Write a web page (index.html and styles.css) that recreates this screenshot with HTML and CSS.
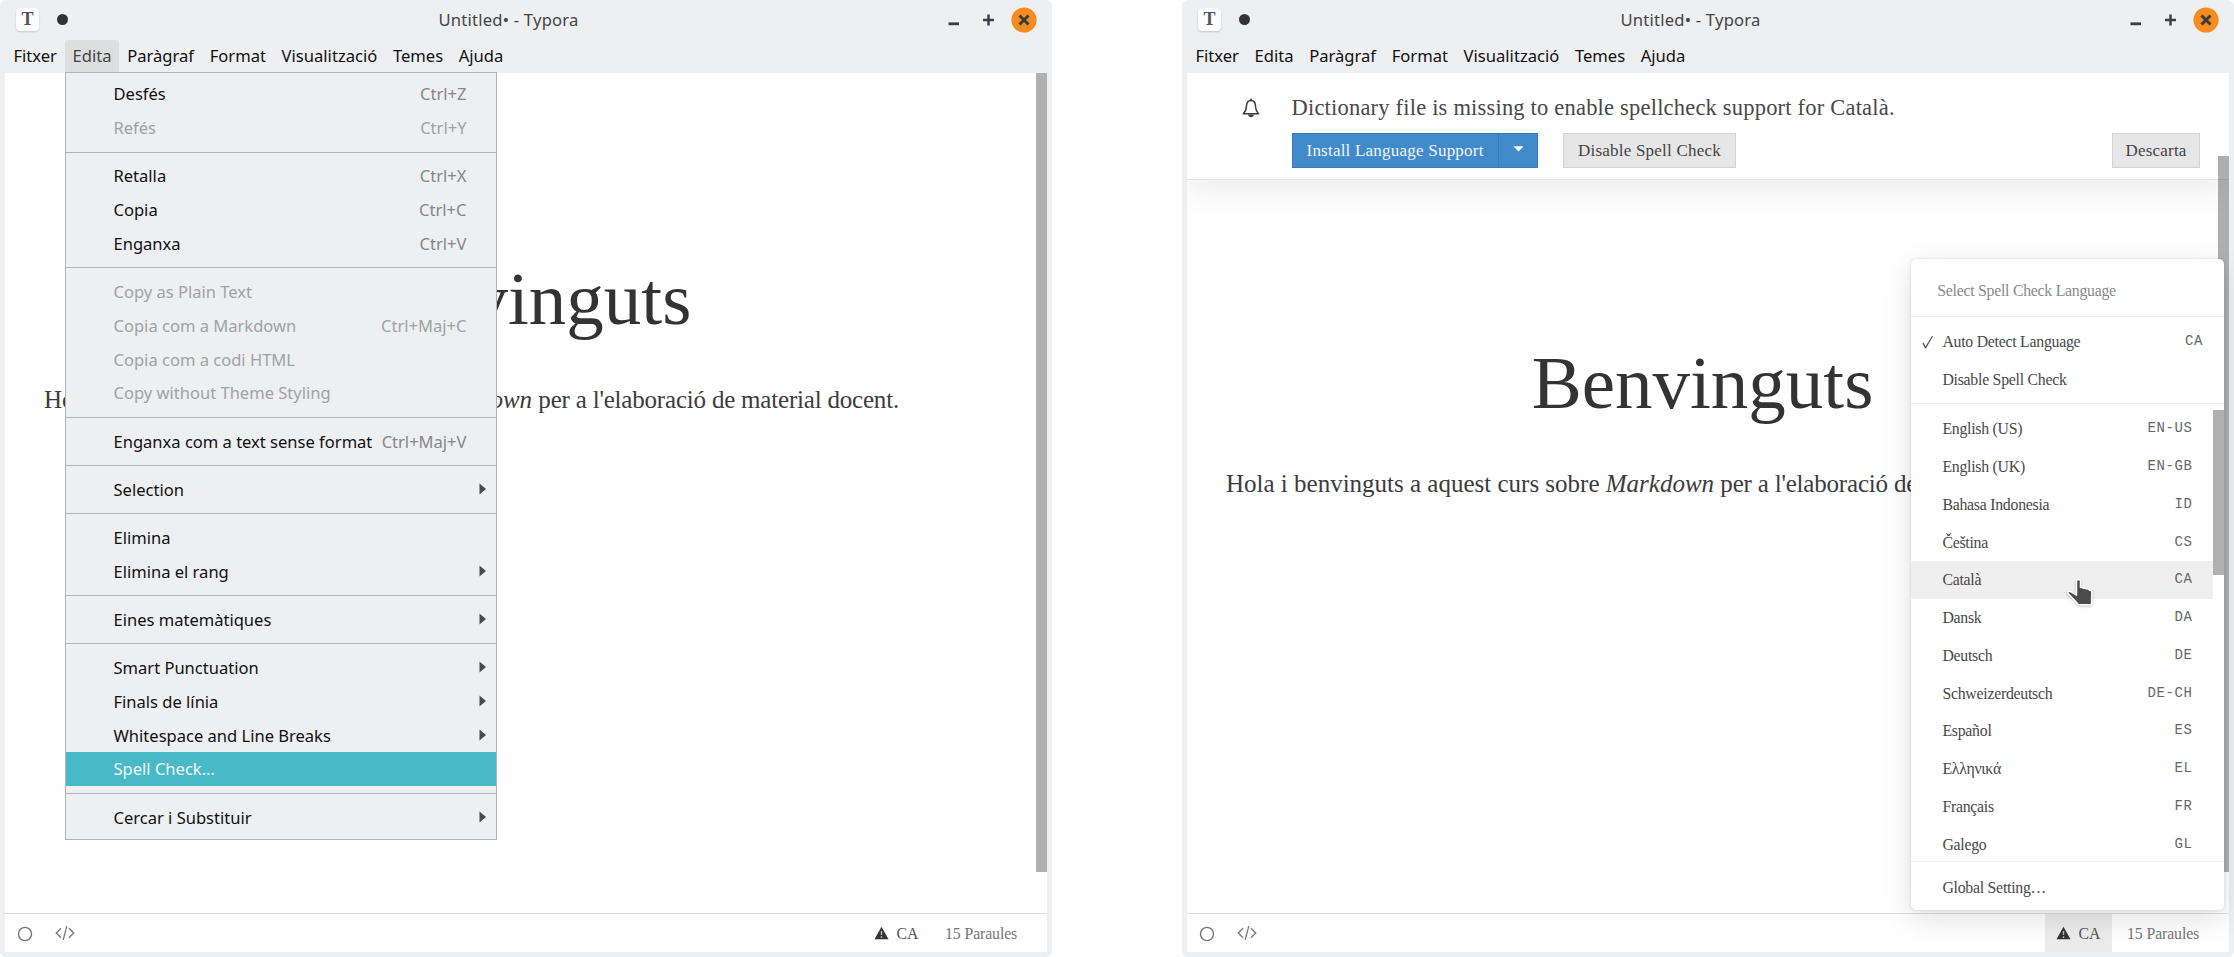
FILE: index.html
```html
<!DOCTYPE html>
<html lang="ca">
<head>
<meta charset="utf-8">
<title>Untitled• - Typora</title>
<link rel="stylesheet" href="styles.css">
</head>
<body>
<svg class="defs" width="0" height="0">
  <symbol id="controls" viewBox="0 0 90 28">
    <path d="M1.5 17.8h10.5" stroke="#3b3c3b" stroke-width="2.8"/>
    <path d="M36 14h11M41.500 8.500v11" stroke="#3f3f4a" stroke-width="2.500"/>
    <circle cx="77" cy="14" r="12.600" fill="#f68b1f"/>
    <path d="M72.500 9.500l9 9M81.500 9.500l-9 9" stroke="#3d3a34" stroke-width="3"/>
  </symbol>
  <symbol id="circle" viewBox="0 0 16 16"><ellipse cx="8" cy="8" rx="6.500" ry="6.600" fill="none" stroke="#777" stroke-width="1.400"/></symbol>
  <symbol id="code" viewBox="0 0 20 16"><path d="M6 3.200L1.300 8L6 12.800M14 3.200L18.700 8L14 12.800M11.800 1.200L8.200 14.800" fill="none" stroke="#777" stroke-width="1.300"/></symbol>
  <symbol id="warn" viewBox="0 0 16 14"><path d="M8 .4L15.500 13.600H.5z" fill="#333"/><path d="M8 4.800v4.400M8 10.400v1.800" stroke="#bbb" stroke-width="1.500"/></symbol>
  <symbol id="arrow" viewBox="0 0 8 12"><path d="M.5.5L7 6L.5 11.500z" fill="#484a4b"/></symbol>
</svg>

<div class="desk">
  <section class="window">
    <header class="titlebar">
      <span class="app-icon">T</span><span class="dot"></span>
      <span class="title">Untitled• - Typora</span>
      <svg class="controls"><use href="#controls"/></svg>
    </header>
    <nav class="menubar"><span>Fitxer</span><span class="open">Edita</span><span>Paràgraf</span><span>Format</span><span>Visualització</span><span>Temes</span><span>Ajuda</span></nav>
    <main class="content">
      <article class="editor">
        <h1>Benvinguts</h1>
        <p>Hola i benvinguts a aquest curs sobre <em>Markdown</em> <span class="tail">per a l'elaboració de material docent.</span></p>
      </article>
      <div class="scrollbar"></div>
    </main>
    <footer class="status">
      <svg class="i-circle"><use href="#circle"/></svg><svg class="i-code"><use href="#code"/></svg>
      <span class="lang"><svg class="i-warn"><use href="#warn"/></svg>CA</span><span class="words">15 Paraules</span>
    </footer>
    <div class="dropdown">
      <div class="item">Desfés<kbd>Ctrl+Z</kbd></div>
      <div class="item off">Refés<kbd>Ctrl+Y</kbd></div>
      <hr>
      <div class="item">Retalla<kbd>Ctrl+X</kbd></div>
      <div class="item">Copia<kbd>Ctrl+C</kbd></div>
      <div class="item">Enganxa<kbd>Ctrl+V</kbd></div>
      <hr>
      <div class="item off">Copy as Plain Text</div>
      <div class="item off">Copia com a Markdown<kbd>Ctrl+Maj+C</kbd></div>
      <div class="item off">Copia com a codi HTML</div>
      <div class="item off">Copy without Theme Styling</div>
      <hr>
      <div class="item">Enganxa com a text sense format<kbd>Ctrl+Maj+V</kbd></div>
      <hr>
      <div class="item">Selection<svg class="arrow"><use href="#arrow"/></svg></div>
      <hr>
      <div class="item">Elimina</div>
      <div class="item">Elimina el rang<svg class="arrow"><use href="#arrow"/></svg></div>
      <hr>
      <div class="item">Eines matemàtiques<svg class="arrow"><use href="#arrow"/></svg></div>
      <hr>
      <div class="item">Smart Punctuation<svg class="arrow"><use href="#arrow"/></svg></div>
      <div class="item">Finals de línia<svg class="arrow"><use href="#arrow"/></svg></div>
      <div class="item">Whitespace and Line Breaks<svg class="arrow"><use href="#arrow"/></svg></div>
      <div class="item active">Spell Check...</div>
      <hr>
      <div class="item">Cercar i Substituir<svg class="arrow"><use href="#arrow"/></svg></div>
    </div>
  </section>

  <section class="window notified">
    <header class="titlebar">
      <span class="app-icon">T</span><span class="dot"></span>
      <span class="title">Untitled• - Typora</span>
      <svg class="controls"><use href="#controls"/></svg>
    </header>
    <nav class="menubar"><span>Fitxer</span><span>Edita</span><span>Paràgraf</span><span>Format</span><span>Visualització</span><span>Temes</span><span>Ajuda</span></nav>
    <main class="content">
      <aside class="notice">
        <svg class="bell" viewBox="0 0 18 20"><path d="M9 2.400C5.800 2.400 4.600 5 4.500 8c-.1 3.600-1.300 6-3.200 7.700h15.400C14.800 14 13.600 11.600 13.500 8 13.400 5 12.200 2.400 9 2.400z" fill="none" stroke="#3c3c3c" stroke-width="1.500" stroke-linejoin="round"/><path d="M9 .8v2" stroke="#3c3c3c" stroke-width="1.800"/><path d="M6 16.500h6c-.4 1.800-1.500 2.800-3 2.800s-2.600-1-3-2.800z" fill="#3c3c3c"/></svg>
        <div class="notice-body">
          <div class="notice-text">Dictionary file is missing to enable spellcheck support for Català.</div>
          <div class="actions">
            <div class="split"><span class="btn primary">Install Language Support</span><span class="btn primary toggle"><svg width="11" height="6"><path d="M.3.3h10.400L5.500 5.500z" fill="#fff"/></svg></span></div>
            <span class="btn">Disable Spell Check</span>
            <span class="btn dismiss">Descarta</span>
          </div>
        </div>
      </aside>
      <article class="editor">
        <h1>Benvinguts</h1>
        <p>Hola i benvinguts a aquest curs sobre <em>Markdown</em> <span class="tail">per a l'elaboració de material docent.</span></p>
      </article>
      <div class="scrollbar"></div>
    </main>
    <footer class="status">
      <svg class="i-circle"><use href="#circle"/></svg><svg class="i-code"><use href="#code"/></svg>
      <span class="lang on"><svg class="i-warn"><use href="#warn"/></svg>CA</span><span class="words">15 Paraules</span>
    </footer>
    <div class="langmenu">
      <div class="lm-head">Select Spell Check Language</div>
      <div class="lm-auto">
        <div class="row"><svg class="check" viewBox="0 0 14 15"><path d="M1.500 9l1.200-.9 2.100 4.300L12 .8l.9.5L5.500 14.300H4.300z" fill="#555"/></svg>Auto Detect Language<code>CA</code></div>
        <div class="row">Disable Spell Check</div>
      </div>
      <div class="lm-list">
        <div class="row">English (US)<code>EN-US</code></div>
        <div class="row">English (UK)<code>EN-GB</code></div>
        <div class="row">Bahasa Indonesia<code>ID</code></div>
        <div class="row">Čeština<code>CS</code></div>
        <div class="row hover">Català<code>CA</code></div>
        <div class="row">Dansk<code>DA</code></div>
        <div class="row">Deutsch<code>DE</code></div>
        <div class="row">Schweizerdeutsch<code>DE-CH</code></div>
        <div class="row">Español<code>ES</code></div>
        <div class="row">Ελληνικά<code>EL</code></div>
        <div class="row">Français<code>FR</code></div>
        <div class="row">Galego<code>GL</code></div>
        <div class="lm-scroll"></div>
      </div>
      <div class="lm-foot">Global Setting…</div>
      <svg class="pointer" viewBox="0 0 30 30"><path d="M11.500 4.200c0-2.400 4-2.400 4 0v6.300c1-.4 2.200-.2 2.700.7 1.300-.5 2.600-.2 3.200.8 1.200-.3 2.600.1 3.200 1.200 1.100-.1 2.200.5 2.200 2l-.3 12.500H13.500l-4-4.500-6.200-6.300c-1.300-1.700.5-3.400 2.300-2.400l5.900 3.700z" fill="#4b4b4b" stroke="#fff" stroke-width="1.500" stroke-linejoin="round"/></svg>
    </div>
  </section>
</div>
</body>
</html>
```

FILE: styles.css
```css
* { box-sizing: border-box; }
body { margin: 0; background: #fefefe; font-family: "Liberation Serif", serif; color: #333; overflow: hidden; }
.defs { position: absolute; }
.desk { display: flex; justify-content: space-between; width: 2234px; height: 957px; }

.window { position: relative; display: flex; flex-direction: column; width: 1052px; height: 957px; padding: 0 5px 5px; background: #eeeff1; border-radius: 6px; }
.titlebar { display: flex; align-items: center; height: 40px; padding: 0 10px 0 11px; font: 16.6px/40px "Noto Sans", sans-serif; color: #444; }
.app-icon { width: 23px; height: 23px; margin-bottom: 1px; border-radius: 4px; background: #fcfcfc; box-shadow: 0 1px 2px rgba(0,0,0,.18); font: bold 18px/23px "Liberation Serif", serif; text-align: center; color: #555; }
.dot { width: 11px; height: 11px; margin: 0 0 1px 18px; border-radius: 50%; background: #333; }
.title { flex: 1; margin-left: 370.5px; letter-spacing: .22px; }
.controls { width: 90px; height: 28px; margin-bottom: 1px; }

.menubar { display: flex; height: 33px; padding-left: .6px; font: 16.6px/32px "Noto Sans", sans-serif; color: #111; }
.menubar span { height: 32px; padding: 0 7.8px; }
.menubar .open { background: #dddfdf; border-radius: 3px 3px 0 0; color: #444; }

.content { position: relative; flex: 1; background: #fefefe; overflow: hidden; }
.editor { width: 1031px; padding-top: 181px; }
.notified .editor { padding-top: 157.500px; }
h1 { margin: 0 0 36px; font-size: 75px; line-height: 90px; font-weight: 400; text-align: center; }
p { margin: 0; padding-left: 39px; font-size: 25px; line-height: 40px; white-space: nowrap; color: #3c3c3c; }
.tail { letter-spacing: -.2px; }
.scrollbar { position: absolute; right: 0; top: 0; width: 11px; height: 799px; background: #b0b0b0; }
.notified .scrollbar { top: 83px; height: 716px; background: rgba(0,0,0,.31); }

.status { display: flex; align-items: center; height: 39px; border-top: 1.500px solid #dcdcdc; background: #fefefe; font-size: 15.8px; line-height: 38px; letter-spacing: -.1px; color: #777; padding-left: 12px; }
.i-circle { width: 16px; height: 16px; margin-top: 2px; }
.i-code { width: 20px; height: 16px; margin-left: 21.500px; }
.lang { display: flex; align-items: center; height: 100%; margin-left: auto; width: 67px; padding: 1px 0 0 10.500px; color: #555; }
.lang.on { background: #ebebeb; }
.i-warn { width: 15px; height: 14px; margin: 0 8px 2px 0; }
.words { width: 117px; padding: 1px 0 0 15px; }

.dropdown { position: absolute; left: 65px; top: 72px; width: 432px; padding: 4.300px 0; border: 1px solid #b0b3b5; background: #eeeff1; font: 16.55px/33.8px "Noto Sans", sans-serif; color: #111; }
.item { display: flex; align-items: center; height: 33.8px; padding: 0 29.500px 0 47.500px; }
.item kbd { margin-left: auto; font: inherit; color: #858789; }
.item.off, .item.off kbd { color: #a0a2a4; }
.item.active { background: #49b9c7; color: #eef8fa; }
.arrow { width: 8px; height: 12px; margin: 0 -20.500px 1px auto; }
hr { height: 0; margin: 6.7px 0; border: 0; border-top: 1px solid #b0b3b5; }

.notice { position: relative; display: flex; height: 107px; padding: 11px 29px 0 55px; border-bottom: 1.500px solid #e6e6e6; background: #fefefe; box-shadow: 0 14px 26px rgba(0,0,0,.06); }
.bell { width: 18px; height: 20px; margin-top: 14px; }
.notice-body { flex: 1; margin-left: 31.500px; }
.notice-text { height: 49px; font-size: 22.5px; line-height: 47px; letter-spacing: .2px; color: #484848; }
.actions { display: flex; }
.btn { display: flex; align-items: center; height: 35px; padding: 0 14px; border: 1px solid #d3d3d3; background: #e6e6e6; font-size: 17px; line-height: 33px; letter-spacing: .22px; color: #444; }
.split { display: flex; width: 246px; margin-right: 25.500px; }
.primary { width: 207px; border-color: #357ebd; background: #428bca; color: #eef5fb; white-space: nowrap; }
.toggle { width: 40px; margin-left: -1px; justify-content: center; padding-bottom: 3px; }
.dismiss { margin-left: auto; width: 88px; padding: 0; justify-content: center; }

.langmenu { position: absolute; left: 729px; top: 259px; width: 313px; height: 651px; border-radius: 5px; background: #fff; box-shadow: 0 0 3px rgba(0,0,0,.14), 0 8px 28px rgba(0,0,0,.12); font-size: 15.8px; letter-spacing: -.25px; color: #484848; }
.lm-head { height: 58px; padding-left: 26.300px; padding-top: 4px; line-height: 56px; letter-spacing: -.26px; color: #888; border-bottom: 1.500px solid #eee; }
.lm-auto { padding: 5.500px 0; height: 87px; }
.lm-auto .row { padding-right: 21px; }
.row { position: relative; display: flex; align-items: center; height: 37.75px; padding: 1px 31.500px 0 31.400px; line-height: 36px; }
.row code { margin-left: auto; font: 14px "Liberation Mono", monospace; letter-spacing: .6px; color: #666; padding-bottom: 2px; }
.check { position: absolute; left: 10px; top: 12px; width: 13px; height: 14px; }
.lm-list { position: relative; height: 458px; padding-top: 6px; border-top: 1.500px solid #eee; margin-top: -1px; }
.lm-list .row { width: 302px; padding-right: 20.500px; }
.hover { background: #efefef; }
.lm-scroll { position: absolute; right: 0; top: 6px; width: 11px; height: 165px; background: #b0b0b0; }
.lm-foot { position: relative; border-top: 1.500px solid #eee; padding: 2px 0 0 31.400px; line-height: 48px; }
.pointer { position: absolute; left: 154px; top: 318px; width: 30px; height: 30px; filter: drop-shadow(0 1px 1px rgba(0,0,0,.25)); }
```
